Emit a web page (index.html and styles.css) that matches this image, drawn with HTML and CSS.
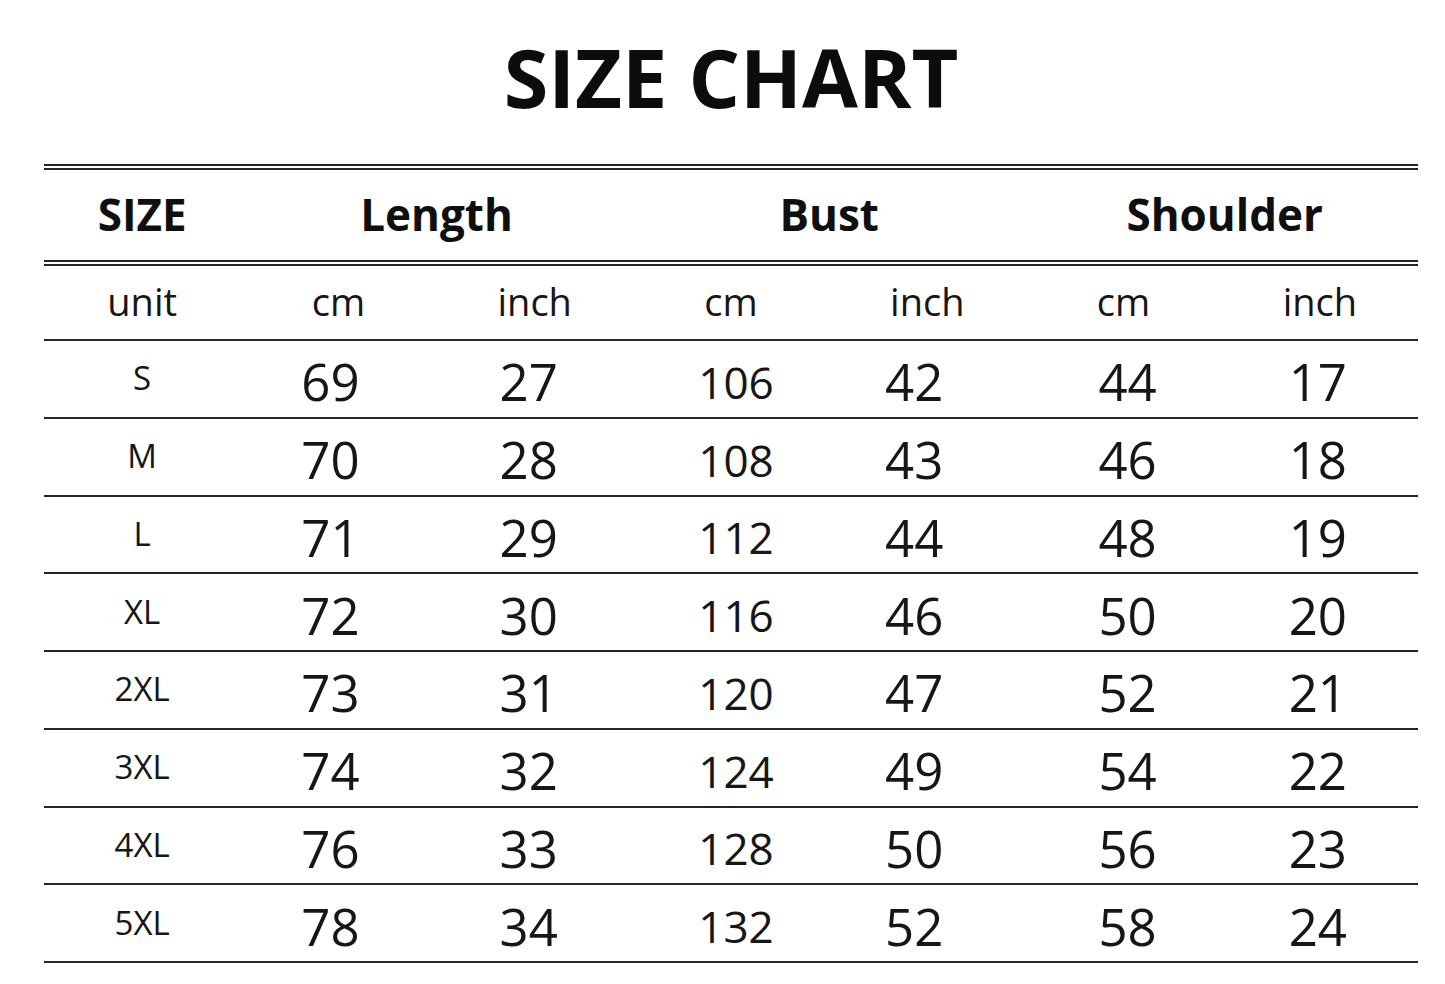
FILE: index.html
```html
<!DOCTYPE html>
<html lang="en">
<head>
<meta charset="utf-8">
<title>Size Chart</title>
<link rel="stylesheet" href="styles.css">
</head>
<body>
<main class="page">
  <h1 class="title">SIZE CHART</h1>
  <div class="chart">
    <div class="row head">
      <div class="cell">SIZE</div>
      <div class="cell span2">Length</div>
      <div class="cell span2">Bust</div>
      <div class="cell span2">Shoulder</div>
    </div>
    <div class="row units">
      <div class="cell">unit</div>
      <div class="cell">cm</div>
      <div class="cell">inch</div>
      <div class="cell">cm</div>
      <div class="cell">inch</div>
      <div class="cell">cm</div>
      <div class="cell">inch</div>
    </div>
    <div class="row data">
      <div class="cell">S</div><div class="cell">69</div><div class="cell">27</div><div class="cell">106</div><div class="cell">42</div><div class="cell">44</div><div class="cell">17</div>
    </div>
    <div class="row data">
      <div class="cell">M</div><div class="cell">70</div><div class="cell">28</div><div class="cell">108</div><div class="cell">43</div><div class="cell">46</div><div class="cell">18</div>
    </div>
    <div class="row data">
      <div class="cell">L</div><div class="cell">71</div><div class="cell">29</div><div class="cell">112</div><div class="cell">44</div><div class="cell">48</div><div class="cell">19</div>
    </div>
    <div class="row data">
      <div class="cell">XL</div><div class="cell">72</div><div class="cell">30</div><div class="cell">116</div><div class="cell">46</div><div class="cell">50</div><div class="cell">20</div>
    </div>
    <div class="row data">
      <div class="cell">2XL</div><div class="cell">73</div><div class="cell">31</div><div class="cell">120</div><div class="cell">47</div><div class="cell">52</div><div class="cell">21</div>
    </div>
    <div class="row data">
      <div class="cell">3XL</div><div class="cell">74</div><div class="cell">32</div><div class="cell">124</div><div class="cell">49</div><div class="cell">54</div><div class="cell">22</div>
    </div>
    <div class="row data">
      <div class="cell">4XL</div><div class="cell">76</div><div class="cell">33</div><div class="cell">128</div><div class="cell">50</div><div class="cell">56</div><div class="cell">23</div>
    </div>
    <div class="row data">
      <div class="cell">5XL</div><div class="cell">78</div><div class="cell">34</div><div class="cell">132</div><div class="cell">52</div><div class="cell">58</div><div class="cell">24</div>
    </div>
  </div>
</main>
</body>
</html>
```

FILE: styles.css
```css
html, body {
  margin: 0;
  padding: 0;
  background: #ffffff;
}

body {
  font-family: "Open Sans", "Noto Sans", "DejaVu Sans", sans-serif;
  color: #161616;
}

.page {
  width: 1374px;
  margin-left: 44px;
}

.title {
  margin: 36px 0 47px;
  height: 81px;
  font-size: 81px;
  line-height: 81px;
  font-weight: 700;
  text-align: center;
  color: #0c0c0c;
}

.chart {
  width: 1374px;
  border-top: 6px double #262626;
}

.row {
  display: grid;
  grid-template-columns: repeat(7, 1fr);
  align-items: center;
  border-bottom: 2px solid #262626;
}

.cell {
  text-align: center;
  line-height: 1;
  white-space: nowrap;
}

.span2 {
  grid-column: span 2;
}

.head {
  height: 90px;
  border-bottom: 6px double #262626;
  font-size: 44px;
  font-weight: 700;
  color: #0f0f0f;
}

.head .cell {
  padding-bottom: 2px;
}

.head .cell:nth-child(4) {
  padding-left: 6px;
}

.units {
  height: 73px;
  font-size: 38px;
}

.units .cell {
  padding-bottom: 4px;
}

.data {
  height: 75.75px;
  font-size: 51px;
}

.data .cell {
  padding-top: 6px;
}

.data .cell:nth-child(1) {
  font-size: 33px;
  padding-top: 0;
  padding-bottom: 2px;
}

.data .cell:nth-child(2) {
  padding-right: 16px;
}

.data .cell:nth-child(3) {
  padding-right: 12px;
}

.data .cell:nth-child(4) {
  font-size: 44px;
  padding-left: 10px;
}

.data .cell:nth-child(5) {
  padding-right: 26px;
}

.data .cell:nth-child(6) {
  padding-left: 8px;
}

.data .cell:nth-child(7) {
  padding-right: 4px;
}
```
